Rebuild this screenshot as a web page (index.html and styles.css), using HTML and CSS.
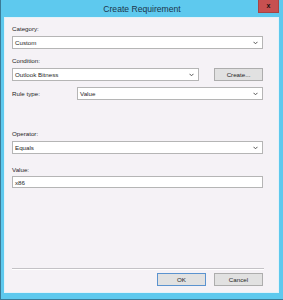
FILE: index.html
```html
<!DOCTYPE html>
<html>
<head>
<meta charset="utf-8">
<link rel="stylesheet" href="styles.css">
</head>
<body>
<div class="window">
  <div class="titlebar">
    <span class="title">Create Requirement</span>
    <span class="close">x</span>
  </div>
  <div class="client">
    <div class="label lbl-cat">Category:</div>
    <div class="select full"><span>Custom</span><svg class="chev" width="5" height="4" viewBox="0 0 5 4"><polyline points="0.5,0.8 2.5,2.8 4.5,0.8" fill="none" stroke="#555" stroke-width="1"/></svg></div>

    <div class="label lbl-cond">Condition:</div>
    <div class="row">
      <div class="select cond"><span>Outlook Bitness</span><svg class="chev" width="5" height="4" viewBox="0 0 5 4"><polyline points="0.5,0.8 2.5,2.8 4.5,0.8" fill="none" stroke="#555" stroke-width="1"/></svg></div>
      <div class="btn create">Create...</div>
    </div>

    <div class="row rule">
      <div class="label rule-lbl">Rule type:</div>
      <div class="select rule-sel"><span>Value</span><svg class="chev" width="5" height="4" viewBox="0 0 5 4"><polyline points="0.5,0.8 2.5,2.8 4.5,0.8" fill="none" stroke="#555" stroke-width="1"/></svg></div>
    </div>

    <div class="label lbl-op">Operator:</div>
    <div class="select full"><span>Equals</span><svg class="chev" width="5" height="4" viewBox="0 0 5 4"><polyline points="0.5,0.8 2.5,2.8 4.5,0.8" fill="none" stroke="#555" stroke-width="1"/></svg></div>

    <div class="label lbl-val">Value:</div>
    <div class="input full"><span>x86</span></div>

    <div class="footer">
      <div class="sep"></div>
      <div class="buttons">
        <div class="btn ok">OK</div>
        <div class="btn">Cancel</div>
      </div>
    </div>
  </div>
</div>
</body>
</html>
```
FILE: styles.css
```css
* { box-sizing: border-box; }
html, body { margin: 0; padding: 0; }
body {
  width: 283px;
  height: 300px;
  overflow: hidden;
  font-family: "Liberation Sans", Arial, sans-serif;
  background: #5bc8ec;
}
.window {
  width: 283px;
  height: 300px;
  background: #5ec9ee;
  border-left: 1px solid #3b7b97;
  border-bottom: 1px solid #3b7b97;
  padding: 0 4px 6px 3px;
  display: flex;
  flex-direction: column;
}
.titlebar {
  height: 17px;
  position: relative;
  display: flex;
  justify-content: center;
  align-items: flex-start;
}
.title {
  font-size: 8.6px;
  line-height: 10px;
  margin-top: 4px;
  margin-left: 1px;
  color: #1c354b;
}
.close {
  position: absolute;
  top: 0;
  right: 0;
  width: 21px;
  height: 13px;
  background: #c75050;
  border: 1px solid #a64545;
  border-top: none;
  color: #1a1010;
  font-weight: bold;
  font-size: 7px;
  line-height: 11px;
  text-align: center;
}
.client {
  flex: 1;
  background: #f5f2f6;
  border: 1px solid #e4f2f9;
  padding: 0 15px 6px 7px;
  display: flex;
  flex-direction: column;
}
.label {
  font-size: 6.2px;
  line-height: 8px;
  height: 8px;
  color: #1e1e1e;
  white-space: nowrap;
}
.lbl-cat { margin-top: 7px; margin-bottom: 3px; }
.lbl-cond { margin-top: 8px; margin-bottom: 3px; }
.lbl-op { margin-top: 30px; margin-bottom: 3px; }
.lbl-val { margin-top: 12px; margin-bottom: 2px; }
.select, .input {
  height: 13px;
  background: #ffffff;
  border: 1px solid #b5b5b5;
  display: flex;
  align-items: center;
  justify-content: space-between;
  padding: 0 4px 0 2px;
  font-size: 6.2px;
  color: #1e1e1e;
  white-space: nowrap;
}
.input { height: 12px; }
.chev { display: block; }
.full { width: 251px; }
.row {
  display: flex;
  align-items: flex-start;
}
.cond { width: 187px; }
.create { margin-left: 15px; width: 49px; height: 12px; }
.rule { margin-top: 6px; align-items: center; }
.rule-lbl { width: 65px; }
.rule-sel { width: 186px; }
.btn {
  height: 13px;
  width: 49px;
  background: #e1e1e1;
  border: 1px solid #adadad;
  font-size: 6.2px;
  color: #1e1e1e;
  display: flex;
  align-items: center;
  justify-content: center;
}
.ok { border-color: #5b93cf; }
.footer { margin-top: auto; }
.sep {
  height: 2px;
  width: 252px;
  border-top: 1px solid #c4c2c6;
  border-bottom: 1px solid #ffffff;
}
.buttons {
  margin-top: 3px;
  display: flex;
  justify-content: flex-end;
  gap: 8px;
  width: 251px;
}
```
